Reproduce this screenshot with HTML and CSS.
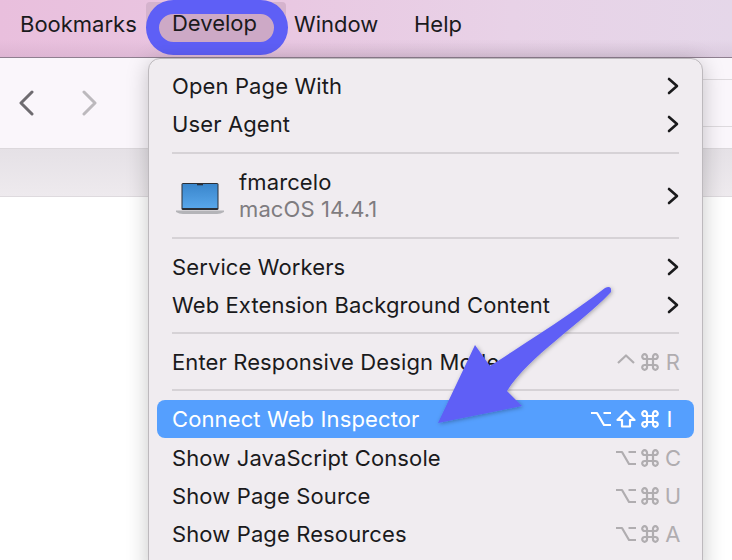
FILE: index.html
```html
<!DOCTYPE html>
<html lang="en">
<head>
<meta charset="utf-8">
<title>Safari Develop menu</title>
<link rel="stylesheet" href="styles.css">
</head>
<body>
<svg class="defs" width="0" height="0">
  <symbol id="opt" viewBox="0 0 20 16"><path d="M0 2 H6 L13 14 H20 M12.5 2 H20"/></symbol>
  <symbol id="shift" viewBox="0 0 20 18"><path d="M10 1.5 L18.5 10 H14 V16.5 H6 V10 H1.5 Z"/></symbol>
  <symbol id="cmd" viewBox="0 0 18 18"><path d="M6 6 V3.7 A2.4 2.4 0 1 0 3.7 6 H14.3 A2.4 2.4 0 1 0 12 3.7 V14.3 A2.4 2.4 0 1 0 14.3 12 H3.7 A2.4 2.4 0 1 0 6 14.3 Z"/></symbol>
  <symbol id="ctrl" viewBox="0 0 18 10"><path d="M1 9 L9 1.5 L17 9"/></symbol>
  <symbol id="chev" viewBox="0 0 12 18"><path d="M2 2 L10 9 L2 16"/></symbol>
</svg>
<header class="menubar">
  <span class="menu-title bookmarks">Bookmarks</span>
  <span class="develop"><span class="develop-ring">Develop</span></span>
  <span class="menu-title window">Window</span>
  <span class="menu-title help">Help</span>
</header>
<section class="toolbar">
  <svg class="nav-icon back" width="16" height="26" viewBox="0 0 16 26"><path d="M14 2 L3 13 L14 24" /></svg>
  <svg class="nav-icon forward" width="16" height="26" viewBox="0 0 16 26"><path d="M2 2 L13 13 L2 24" /></svg>
  <div class="field"></div>
</section>
<section class="tabbar"></section>
<main class="content"></main>

<nav class="menu">
  <div class="row"><span>Open Page With</span><svg class="chev"><use href="#chev"/></svg></div>
  <div class="row"><span>User Agent</span><svg class="chev"><use href="#chev"/></svg></div>
  <div class="sep sep-a"></div>
  <div class="device">
    <svg class="laptop" width="50" height="33" viewBox="0 0 50 33">
      <defs><linearGradient id="scr" x1="0" y1="0" x2="0" y2="1"><stop offset="0" stop-color="#3a86cc"/><stop offset="1" stop-color="#58a6ea"/></linearGradient></defs>
      <rect x="6.5" y="1" width="37" height="27" rx="1.5" fill="#2b2f36"/>
      <rect x="7.5" y="2" width="35" height="24" fill="url(#scr)"/>
      <rect x="22" y="1.5" width="6" height="1.8" fill="#2b2f36"/>
      <path d="M1 28.5 H49 V30 Q46 32 42 32 H8 Q4 32 1 30 Z" fill="#b4b4b8"/>
    </svg>
    <div class="device-text"><div class="device-name">fmarcelo</div><div class="device-os">macOS 14.4.1</div></div>
    <svg class="chev"><use href="#chev"/></svg>
  </div>
  <div class="sep sep-b"></div>
  <div class="row"><span>Service Workers</span><svg class="chev"><use href="#chev"/></svg></div>
  <div class="row"><span>Web Extension Background Content</span><svg class="chev"><use href="#chev"/></svg></div>
  <div class="sep sep-c"></div>
  <div class="row"><span>Enter Responsive Design Mode</span><span class="keys"><svg class="k k-ctrl"><use href="#ctrl"/></svg><svg class="k k-cmd"><use href="#cmd"/></svg><span class="letter">R</span></span></div>
  <div class="sep sep-d"></div>
  <div class="row active"><span>Connect Web Inspector</span><span class="keys"><svg class="k k-opt"><use href="#opt"/></svg><svg class="k k-shift"><use href="#shift"/></svg><svg class="k k-cmd"><use href="#cmd"/></svg><span class="letter">I</span></span></div>
  <div class="row"><span>Show JavaScript Console</span><span class="keys"><svg class="k k-opt"><use href="#opt"/></svg><svg class="k k-cmd"><use href="#cmd"/></svg><span class="letter">C</span></span></div>
  <div class="row"><span>Show Page Source</span><span class="keys"><svg class="k k-opt"><use href="#opt"/></svg><svg class="k k-cmd"><use href="#cmd"/></svg><span class="letter">U</span></span></div>
  <div class="row"><span>Show Page Resources</span><span class="keys"><svg class="k k-opt"><use href="#opt"/></svg><svg class="k k-cmd"><use href="#cmd"/></svg><span class="letter">A</span></span></div>
</nav>

<svg class="arrow" width="732" height="560" viewBox="0 0 732 560">
  <defs><filter id="sh" x="-10%" y="-10%" width="120%" height="120%"><feDropShadow dx="1" dy="1" stdDeviation="2" flood-color="#000" flood-opacity=".3"/></filter></defs>
  <path filter="url(#sh)" fill="#5e5ff6" d="M475 345 L490 366 C530 340 570 315 605 288 Q612 285 611 292 C580 325 530 355 507 391 L522 406 L438 423 Z"/>
</svg>
</body>
</html>
```
FILE: styles.css
```css
* { box-sizing: border-box; }
html, body { margin: 0; padding: 0; }
body {
  width: 732px;
  height: 560px;
  overflow: hidden;
  position: relative;
  background: #fff;
  font-family: Inter, "Liberation Sans", sans-serif;
  color: #1a1a1c;
  display: flex;
  flex-direction: column;
}
.defs { position: absolute; }
.menubar {
  height: 58px;
  flex: none;
  display: flex;
  align-items: flex-start;
  padding-left: 20px;
  background:
    linear-gradient(rgba(120,90,120,0) 70%, rgba(120,90,120,.1) 100%),
    linear-gradient(90deg, #e9bfdd 0%, #e9c8e2 40%, #e8d2e7 70%, #e5d7e9 100%);
  border-bottom: 1px solid #8f7f90;
  font-size: 22px;
}
.menu-title { line-height: 48px; white-space: nowrap; }
.bookmarks { width: 126px; }
.develop {
  width: 140px;
  height: 30px;
  margin-top: 2px;
  border-radius: 4px;
  background: #d5b3cd;
  flex: none;
}
.develop-ring {
  display: block;
  width: 142px;
  height: 55px;
  margin-top: -2px;
  border: solid #5e5ff6;
  border-width: 14px 14px 13px 13px;
  border-radius: 28px;
  background: #cda9c6;
  line-height: 20px;
  text-align: center;
  padding-right: 4px;
  margin-bottom: -23px;
}
.develop-ring { line-height: 18px; }
.window { margin-left: 8px; width: 120px; }
.toolbar {
  height: 91px;
  flex: none;
  display: flex;
  align-items: center;
  padding-left: 18px;
  gap: 48px;
  background: #faf6fb;
  border-bottom: 1px solid #dcd8dc;
}
.nav-icon { fill: none; stroke-width: 3; stroke-linecap: round; stroke-linejoin: round; margin-top: -1px; }
.back { stroke: #6e6b70; }
.forward { stroke: #bcb9bd; }
.field {
  margin-left: auto;
  width: 100px;
  height: 48px;
  border: solid #dedade;
  border-width: 1px 0;
}
.tabbar {
  height: 48px;
  flex: none;
  background: linear-gradient(#e5e1e6, #eeeaee);
  border-bottom: 1px solid #dedade;
}
.content { flex: 1; background: #fff; }
.menu {
  position: absolute;
  left: 148px;
  top: 58px;
  width: 555px;
  height: 520px;
  padding: 8px 8px 0;
  background: #f0ecf0;
  border: 1px solid #bdb9bd;
  border-radius: 12px 12px 0 0;
  box-shadow: 0 4px 22px rgba(0,0,0,.22);
  font-size: 22px;
  letter-spacing: .12px;
}
.row {
  height: 38px;
  padding: 0 15px;
  display: flex;
  align-items: center;
  justify-content: space-between;
  white-space: nowrap;
}
.active {
  background: #559ffe;
  color: #fff;
  border-radius: 8px;
  margin-bottom: 1px;
}
.sep { height: 2px; background: #d6d2d6; margin: 0 15px; }
.sep-a { margin-top: 9px; }
.sep-b { margin-bottom: 9px; }
.sep-c { margin-top: 8px; margin-bottom: 9px; }
.sep-d { margin-top: 8px; margin-bottom: 9px; }
.device {
  height: 83px;
  display: flex;
  align-items: center;
  padding: 0 15px 0 18px;
}
.laptop { flex: none; margin-top: 6px; }
.device-text { margin-left: 14px; flex: 1; line-height: 27px; margin-top: 1px; }
.device-os { color: #7f7c80; }
.chev { width: 12px; height: 18px; fill: none; stroke: #1a1a1c; stroke-width: 2.6; stroke-linecap: round; stroke-linejoin: round; flex: none; }
.keys {
  display: flex;
  align-items: center;
  gap: 5px;
  color: #b0adb0;
  margin-right: -3px;
}
.k { fill: none; stroke: currentColor; stroke-width: 2.2; stroke-linejoin: round; flex: none; }
.k-opt { width: 20px; height: 16px; }
.k-shift { width: 20px; height: 18px; }
.k-cmd { width: 18px; height: 18px; }
.k-ctrl { width: 18px; height: 10px; margin-top: -7px; margin-right: 1px; }
.letter { width: 18px; text-align: center; }
.active .keys { color: #fff; }
.active .letter { padding-right: 7px; }
.arrow { position: absolute; left: 0; top: 0; pointer-events: none; }
```
